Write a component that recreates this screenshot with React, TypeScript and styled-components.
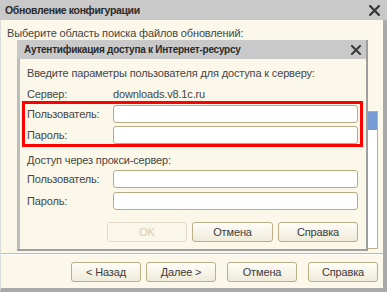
import styled, { createGlobalStyle } from "styled-components";

const GlobalStyle = createGlobalStyle`
  html, body {
    margin: 0;
    padding: 0;
    background: #fbf8ea;
  }
  * {
    box-sizing: border-box;
  }
`;

function CloseIcon({ size }: { size: number }) {
  return (
    <svg width={size} height={size} viewBox="0 0 10 10">
      <path
        d="M1 1 L9 9 M9 1 L1 9"
        stroke="#3a3a3a"
        strokeWidth="2"
        strokeLinecap="square"
      />
    </svg>
  );
}

export default function App() {
  return (
    <>
      <GlobalStyle />
      <Window>
        <TitleBar $height={20} $pad={5}>
          <TitleText $size={10.5} $spacing={-0.35}>
            Обновление конфигурации
          </TitleText>
          <CloseBox $right={7}>
            <CloseIcon size={11} />
          </CloseBox>
        </TitleBar>
        <Frame>
          <Prompt>Выберите область поиска файлов обновлений:</Prompt>
          <ListBox>
            <ListRow />
          </ListBox>
          <Separator />
          <ButtonBar>
            <Button $width={70}>&lt; Назад</Button>
            <Button $width={70}>Далее &gt;</Button>
            <Button $width={70} $gapLeft={6}>
              Отмена
            </Button>
            <Button $width={70} $gapLeft={6}>
              Справка
            </Button>
          </ButtonBar>
        </Frame>

        <Dialog>
          <TitleBar $height={19} $pad={7}>
            <TitleText $size={10} $spacing={-0.25}>
              Аутентификация доступа к Интернет-ресурсу
            </TitleText>
            <CloseBox $right={5}>
              <CloseIcon size={10} />
            </CloseBox>
          </TitleBar>
          <DialogBody>
            <Line>Введите параметры пользователя для доступа к серверу:</Line>
            <ServerRow>
              <Label>Сервер:</Label>
              <span>downloads.v8.1c.ru</span>
            </ServerRow>
            <Highlight>
              <FieldRow>
                <Label>Пользователь:</Label>
                <Input />
              </FieldRow>
              <FieldRow>
                <Label>Пароль:</Label>
                <Input type="password" />
              </FieldRow>
            </Highlight>
            <Line $top={6}>Доступ через прокси-сервер:</Line>
            <FieldGroup>
              <FieldRow>
                <Label>Пользователь:</Label>
                <Input />
              </FieldRow>
              <FieldRow>
                <Label>Пароль:</Label>
                <Input type="password" />
              </FieldRow>
            </FieldGroup>
            <DialogButtons>
              <Button $width={80} disabled>
                OK
              </Button>
              <Button $width={81}>Отмена</Button>
              <Button $width={80}>Справка</Button>
            </DialogButtons>
          </DialogBody>
        </Dialog>
      </Window>
    </>
  );
}

const Window = styled.div`
  position: relative;
  width: 387px;
  height: 292px;
  display: flex;
  flex-direction: column;
  font-family: "Liberation Sans", Arial, sans-serif;
  font-size: 11px;
  letter-spacing: -0.15px;
  color: #454545;
  overflow: hidden;
`;

const TitleBar = styled.div<{ $height: number; $pad: number }>`
  position: relative;
  display: flex;
  align-items: center;
  height: ${(p) => p.$height}px;
  padding-left: ${(p) => p.$pad}px;
  background: #c9c9c9;
  flex-shrink: 0;
`;

const TitleText = styled.div<{ $size: number; $spacing: number }>`
  font-size: ${(p) => p.$size}px;
  letter-spacing: ${(p) => p.$spacing}px;
  font-weight: bold;
  color: #2a2a2a;
`;

const CloseBox = styled.div<{ $right: number }>`
  display: flex;
  margin-left: auto;
  margin-right: ${(p) => p.$right}px;
`;

const Frame = styled.div`
  flex: 1;
  display: flex;
  flex-direction: column;
  background: #fbf8ea;
  border-left: 1px solid #dcdcdc;
  border-right: 4px solid #a9a9a9;
  border-bottom: 4px solid #a9a9a9;
`;

const Prompt = styled.div`
  padding: 6px 0 0 6px;
  line-height: 14px;
`;

const ListBox = styled.div`
  margin: 71px 5px 0 30px;
  height: 138px;
  background: #fff;
  border: 1px solid #b9b08c;
`;

const ListRow = styled.div`
  height: 18px;
  background: #769bd2;
`;

const Separator = styled.div`
  margin-top: 4px;
  border-top: 1px solid #c4bc9a;
  border-bottom: 1px solid #fff;
`;

const ButtonBar = styled.div`
  display: flex;
  justify-content: flex-end;
  gap: 5px;
  padding: 7px 5px 0 0;
`;

const Button = styled.button<{ $width: number; $gapLeft?: number }>`
  width: ${(p) => p.$width}px;
  height: 20px;
  margin-left: ${(p) => p.$gapLeft ?? 0}px;
  padding: 0;
  font-family: inherit;
  font-size: 11px;
  letter-spacing: inherit;
  color: #3c3c3c;
  background: linear-gradient(#fefdf8, #efebd9);
  border: 1px solid #b8ae88;
  border-radius: 3px;

  &:disabled {
    color: #d2cbb0;
    border-color: #e0dac4;
    background: #faf7ea;
  }
`;

const Dialog = styled.div`
  position: absolute;
  left: 17px;
  top: 40px;
  width: 351px;
  height: 211px;
  display: flex;
  flex-direction: column;
  border-right: 2px solid #9e9e9e;
  border-bottom: 2px solid #9e9e9e;
  background: #fbf8ea;
`;

const DialogBody = styled.div`
  flex: 1;
  display: flex;
  flex-direction: column;
  padding: 7px 8px 0 7px;
  border-left: 3px solid #bcbcbc;
`;

const Line = styled.div<{ $top?: number }>`
  margin-top: ${(p) => p.$top ?? 0}px;
  line-height: 14px;
`;

const ServerRow = styled.div`
  display: flex;
  margin-top: 7px;
  line-height: 14px;
`;

const Label = styled.span`
  width: 86px;
  flex-shrink: 0;
`;

const Highlight = styled.div`
  display: flex;
  flex-direction: column;
  gap: 3px;
  margin: 0 -5px;
  padding: 1px 2px 0;
  border: 3px solid #ff0000;
`;

const FieldGroup = styled.div`
  display: flex;
  flex-direction: column;
  gap: 4px;
  margin-top: 3px;
`;

const FieldRow = styled.div`
  display: flex;
  align-items: center;
  height: 18px;
`;

const Input = styled.input`
  flex: 1;
  height: 18px;
  min-width: 0;
  padding: 0 3px;
  background: #fff;
  border: 1px solid #b5ac86;
  border-radius: 3px;
  font-family: inherit;
  font-size: 11px;
`;

const DialogButtons = styled.div`
  display: flex;
  justify-content: flex-end;
  gap: 5px;
  margin-top: 12px;
`;
